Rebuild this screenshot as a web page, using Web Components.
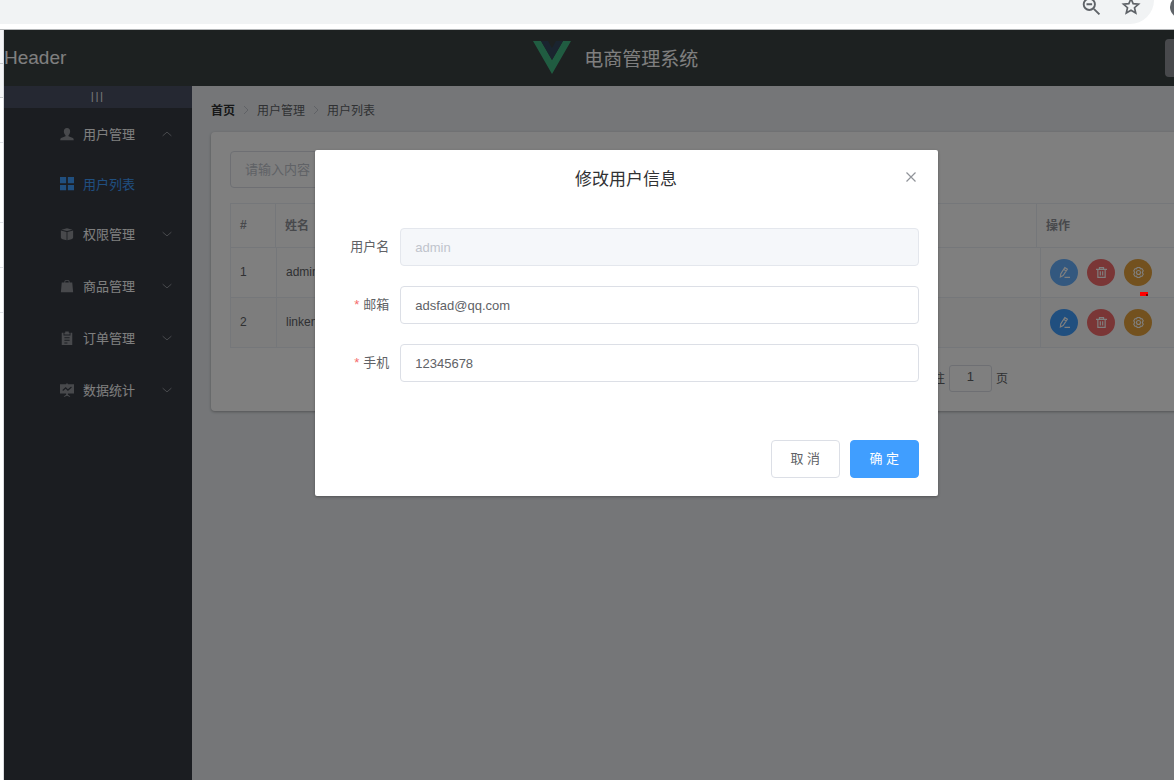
<!DOCTYPE html>
<html lang="zh-CN">
<head>
<meta charset="utf-8">
<title>电商管理系统</title>
<style>
html,body{margin:0;height:100%}
body{font-family:"Liberation Sans","Noto Sans CJK SC",sans-serif;font-size:13px;color:#606266;overflow:hidden;background:#fff}
</style>
</head>
<body>
<mall-window></mall-window>
<script>
const ICONS = {
  user:'<path fill="currentColor" d="M8 1c-2.400 0-3.600 1.700-3.600 3.900 0 1.900.8 3.600 1.900 4.400v1.300L2 12.300C.8 12.800.3 13.500.3 15h15.400c0-1.500-.5-2.200-1.700-2.700l-4.300-1.700V9.300c1.100-.8 1.900-2.500 1.900-4.400C11.600 2.700 10.400 1 8 1z"/>',
  menu:'<path fill="currentColor" d="M0 0h7v7H0zM9 0h7v7H9zM0 9h7v6H0zM9 9h7v6H9z"/>',
  box:'<path fill="currentColor" d="M8 1.500 14.300 3 8 4.700 1.700 3zM1 4l6.500 1.800V15L3 13.900Q1 13.400 1 12zM15 4 8.500 5.800V15l4.500-1.100q2-.5 2-1.900z"/>',
  bag:'<path fill="currentColor" fill-rule="evenodd" d="M5 4V3a2 2 0 0 1 2-2h2a2 2 0 0 1 2 2v1h3l1 11H1L2 4zm1 0h4V3.400A1.400 1.400 0 0 0 8.600 2H7.400A1.400 1.400 0 0 0 6 3.400z"/>',
  order:'<path fill="currentColor" fill-rule="evenodd" d="M5 2h1V.5h4V2h1v2H5zM2 2h2v3h8V2h2v14H2zm3 5v1.200h6V7zm0 3v1.200h6V10zm0 3v1.200h3.500V13z"/>',
  data:'<path fill="currentColor" fill-rule="evenodd" d="M0 1.500h7V.5h2v1h7V12H0zM3.500 9 6.500 6.500l2.500 2.500 4.500-4-.8-.9L9 7.200 6.500 4.700 2.700 8.100zM7 12h2v1.500l2.500 1.500v1L8 14.500 4.500 16v-1L7 13.500z"/>',
  down:'<path fill="none" stroke="currentColor" stroke-width="1.600" d="m1 5 7 6 7-6"/>',
  up:'<path fill="none" stroke="currentColor" stroke-width="1.600" d="m1 11 7-6 7 6"/>',
  right:'<path fill="none" stroke="currentColor" stroke-width="2" d="m4 0 8 8-8 8"/>',
  close:'<path fill="none" stroke="currentColor" stroke-width="1.600" d="m2 2 12 12M14 2 2 14"/>',
  edit:'<path fill="none" stroke="currentColor" stroke-width="1.700" d="M2 14.500 2.500 10 8.500.8l3.700 2.300-6.200 9.200zM7 3.500l3.700 2.300M8 15h8"/>',
  trash:'<path fill="none" stroke="currentColor" stroke-width="1.700" d="M0 3.500h16M5 3.500V.8h6v2.700M2.700 3.500v11.700h10.600V3.500M6.300 6.300v6M9.700 6.300v6"/>',
  gear:'<path fill="none" stroke="currentColor" stroke-width="1.600" d="M6 .8h4l.7 2 2.200-.5 2 3.200L13.500 8l1.400 2.500-2 3.200-2.200-.5-.7 2H6l-.7-2-2.200.5-2-3.200L2.500 8 1.100 5.500l2-3.200 2.200.5z"/><circle cx="8" cy="8" r="2.900" fill="none" stroke="currentColor" stroke-width="1.600"/>',
  zoom:'<g fill="none" stroke="currentColor" stroke-width="1.700"><circle cx="6.500" cy="6.500" r="5"/><path d="m10.500 10.500 5 5M4 6.500h5"/></g>',
  star:'<path fill="none" stroke="currentColor" stroke-width="1.500" d="m8 1.500 1.900 4.400 4.800.4-3.600 3.200 1.100 4.700L8 11.700l-4.200 2.500 1.100-4.700-3.600-3.200 4.800-.4z"/>'
};

function define(name, html) {
  const template = document.createElement('template');
  customElements.define(name, class extends HTMLElement {
    connectedCallback() {
      if (this.shadowRoot) return;
      template.innerHTML = typeof html === 'function' ? html(this) : html;
      this.attachShadow({mode:'open'}).append(template.content.cloneNode(true));
    }
  });
}

define('mall-icon', el => `
<style>:host{display:block;flex:none;width:var(--size,14px);height:var(--size,14px)}svg{display:block;width:100%;height:100%;overflow:visible}</style>
<svg viewBox="0 0 16 16" aria-hidden="true">${ICONS[el.getAttribute('name')]}</svg>`);

define('mall-window', `
<style>
:host{display:grid;grid-template-rows:30px 1fr;height:100vh;overflow:hidden}
.body{display:grid;grid-template-columns:4px 1fr;min-height:0}
.edge{background:linear-gradient(#dadce0,#dadce0) right/1px 100% no-repeat,#fff;display:flex;flex-direction:column}
.edge i{height:33px;border-bottom:1px solid #c8cacd;background:#f4f5f6;margin-right:1px}
.edge i:nth-child(n+3){height:44px;background:#fff;border-color:#dfe1e5}
.edge i:nth-child(4){height:79px}
.page{overflow:hidden;min-width:0;position:relative}
mall-app,.mask{margin-right:-75px}
.mask{position:absolute;inset:0;background:rgba(0,0,0,.5)}
mall-dialog{width:50%;margin:120px auto 0}
.mark{position:absolute;left:1136px;top:262px;width:8px;height:4px;background:linear-gradient(#7a0000,#7a0000) right bottom/2px 2px no-repeat,#f00}
</style>
<mall-toolbar></mall-toolbar>
<div class="body">
 <div class="edge"><i></i><i></i><i></i><i></i><i></i><i></i></div>
 <div class="page"><mall-app></mall-app><div class="mask"><mall-dialog title="修改用户信息"></mall-dialog></div><span class="mark"></span></div>
</div>`);

define('mall-toolbar', `
<style>
:host{display:flex;background:#fff;border-bottom:1px solid #b4b6b8;height:29px;overflow:hidden}
.bar{flex:1;height:24px;background:#f1f3f4;border-bottom-right-radius:24px;display:flex;justify-content:flex-end;gap:22px;padding-right:14px;color:#5f6368;--size:18px}
mall-icon{margin-top:-3px}
.avatar{width:22px;height:22px;border-radius:50%;background:#5f6368;margin:-4px -18px 0 16px}
</style>
<div class="bar"><mall-icon name="zoom"></mall-icon><mall-icon name="star"></mall-icon></div><span class="avatar"></span>`);

define('mall-app', `
<style>
:host{display:grid;grid-template:56px 1fr/188px 1fr;height:100%}
header{grid-column:1/3;background:#3a4242;color:#fff;display:flex;justify-content:space-between;align-items:center;padding-right:18px;font-size:19px}
.brand{display:flex;align-items:center;gap:13px;padding-bottom:2px}
.brand svg{width:38px;height:33px}
header button{width:66px;height:38px;border:0;border-radius:4px;background:#909399;color:#fff;font:13px "Liberation Sans"}
main{background:#eaedf1;padding:18px 19px;min-width:0}
nav{display:flex;align-items:center;gap:7px;height:12px;font-size:12px;color:#606266;--size:8px;margin-bottom:16px}
nav b{color:#303133}
nav mall-icon{color:#c0c4cc}
nav b,nav span{padding-bottom:2px}
</style>
<header><span>Header</span>
<div class="brand"><svg viewBox="0 0 38 33"><path fill="#41b883" d="M0 0h8l11 19L30 0h8L19 33z"/><path fill="#34495e" d="M8 0h7l4 7 4-7h7L19 19z"/></svg><span>电商管理系统</span></div>
<button type="button" aria-label="退出"></button></header>
<mall-sidebar></mall-sidebar>
<main><nav><b>首页</b><mall-icon name="right"></mall-icon><span>用户管理</span><mall-icon name="right"></mall-icon><span>用户列表</span></nav><mall-users></mall-users></main>`);

define('mall-sidebar', `
<style>
:host{display:block;background:#363a43}
.toggle{display:block;width:100%;height:22px;border:0;background:#4a5064;color:#fff;font:10px/22px "Liberation Sans";letter-spacing:2px;text-align:center;padding:0}
</style>
<button class="toggle" type="button">|||</button>
<mall-item icon="user" arrow="up">用户管理</mall-item>
<mall-item icon="menu" active>用户列表</mall-item>
<mall-item icon="box" arrow="down">权限管理</mall-item>
<mall-item icon="bag" arrow="down">商品管理</mall-item>
<mall-item icon="order" arrow="down">订单管理</mall-item>
<mall-item icon="data" arrow="down">数据统计</mall-item>`);

define('mall-item', el => `
<style>
:host{display:block}
a{display:flex;align-items:center;height:52px;padding:0 20px 0 56px;color:#fff;text-decoration:none;font-size:13px}
:host([active]) a{height:48px;color:#409eff}
.i{color:#909399;margin-right:9px}
:host([active]) .i{color:#409eff}
.text{padding-bottom:2px}
.arrow{--size:10px;margin-left:auto;color:#909399}
</style>
<a href="#"><mall-icon class="i" name="${el.getAttribute('icon')}"></mall-icon><span class="text"><slot></slot></span>${el.hasAttribute('arrow')?`<mall-icon class="arrow" name="${el.getAttribute('arrow')}"></mall-icon>`:''}</a>`);

define('mall-users', `
<style>
:host{display:block;background:#fff;border-radius:4px;padding:19px;box-shadow:0 1px 3px rgba(0,0,0,.3)}
.search{box-sizing:border-box;display:block;width:360px;height:37px;border:1px solid #dcdfe6;border-radius:4px;padding:0 14px;font:13px "Liberation Sans","Noto Sans CJK SC",sans-serif;background:#fff}
.search::placeholder{color:#c0c4cc;opacity:1}
table{width:100%;table-layout:fixed;border-collapse:separate;border-spacing:0;font-size:12px;border-left:1px solid #ebeef5}
.head{margin-top:15px;border-top:1px solid #ebeef5}
th,td{box-sizing:border-box;border:0 solid #ebeef5;border-width:0 1px 1px 0;padding:0 9px 2px;text-align:left}
th{height:44px;color:#909399}td{height:50px}
td:last-child{padding-bottom:0}
tr:nth-child(2) td{background:#fafafa}
.acts{display:flex;gap:9px}
.page{display:flex;justify-content:flex-end;align-items:center;gap:4px;padding-right:203px;margin-top:16px;height:28px;font-size:12px}
.page label,.page span{padding-bottom:2px}
.page input{box-sizing:border-box;width:43px;height:27px;border:1px solid #dcdfe6;border-radius:3px;text-align:center;font:13px "Liberation Sans";color:#606266;padding:0 0 3px}
</style>
<input class="search" placeholder="请输入内容" aria-label="搜索">
<table class="head"><colgroup><col style="width:45px"><col><col style="width:174px"></colgroup><thead><tr><th>#</th><th>姓名</th><th>操作</th></tr></thead></table>
<table><colgroup><col style="width:46px"><col><col style="width:170px"></colgroup><tbody>
<tr><td>1</td><td>admin</td><td><div class="acts"><mall-action icon="edit" hot label="编辑"></mall-action><mall-action icon="trash" label="删除"></mall-action><mall-action icon="gear" label="设置"></mall-action></div></td></tr>
<tr><td>2</td><td>linken</td><td><div class="acts"><mall-action icon="edit" label="编辑"></mall-action><mall-action icon="trash" label="删除"></mall-action><mall-action icon="gear" label="设置"></mall-action></div></td></tr>
</tbody></table>
<div class="page"><label for="p">前往</label><input id="p" value="1"><span>页</span></div>`);

define('mall-action', el => `
<style>
:host{display:block;--size:11px}
button{display:grid;place-items:center;width:28px;height:27px;padding:0 0 1px;border:0;border-radius:50%;color:#fff;background:#409eff}
:host([hot]) button{background:#66b1ff}
:host([icon=trash]) button{background:#f56c6c}
:host([icon=gear]) button{background:#e6a23c}
</style>
<button type="button" aria-label="${el.getAttribute('label')}"><mall-icon name="${el.getAttribute('icon')}"></mall-icon></button>`);

define('mall-field', el => `
<style>
:host{display:grid;grid-template-columns:56px 1fr;column-gap:11px;height:38px}
label{text-align:right;line-height:38px;height:38px;color:#606266}
:host([required]) label::before{content:"*";color:#f56c6c;margin-right:4px}
input{box-sizing:border-box;width:100%;height:38px;border:1px solid #dcdfe6;border-radius:4px;padding:0 14px;background:#fff;color:#606266;font:13px "Liberation Sans"}
input:disabled{background:#f5f7fa;border-color:#e4e7ed;color:#c0c4cc}
</style>
<label for="f">${el.getAttribute('label')}</label><input id="f" value="${el.getAttribute('value')}" ${el.hasAttribute('disabled')?'disabled':''}>`);

define('mall-dialog', el => `
<style>
:host{display:block;box-sizing:border-box;background:#fff;border-radius:2px;box-shadow:0 1px 3px rgba(0,0,0,.3);padding:18px 19px 18px 18px;color:#303133;font-size:13px}
.top{display:grid;grid-template-columns:16px 1fr 16px;height:22px}
h2{margin:0;font-size:17px;font-weight:400;text-align:center;line-height:24px}
.close{border:0;background:none;padding:0;width:16px;height:18px;display:grid;place-items:center;color:#909399;--size:12px}
form{display:grid;gap:20px;margin-top:38px}
.foot{display:flex;justify-content:flex-end;gap:10px;margin-top:58px}
.foot button{box-sizing:border-box;width:69px;height:38px;border:1px solid #dcdfe6;border-radius:4px;background:#fff;color:#606266;font:13px "Liberation Sans","Noto Sans CJK SC",sans-serif;padding:0 0 4px}
.foot .primary{background:#409eff;border-color:#409eff;color:#fff}
</style>
<div class="top"><span></span><h2>${el.getAttribute('title')}</h2><button class="close" type="button" aria-label="关闭"><mall-icon name="close"></mall-icon></button></div>
<form><mall-field label="用户名" value="admin" disabled></mall-field><mall-field label="邮箱" value="adsfad@qq.com" required></mall-field><mall-field label="手机" value="12345678" required></mall-field></form>
<div class="foot"><button type="button">取 消</button><button class="primary" type="button">确 定</button></div>`);
</script>
</body>
</html>
